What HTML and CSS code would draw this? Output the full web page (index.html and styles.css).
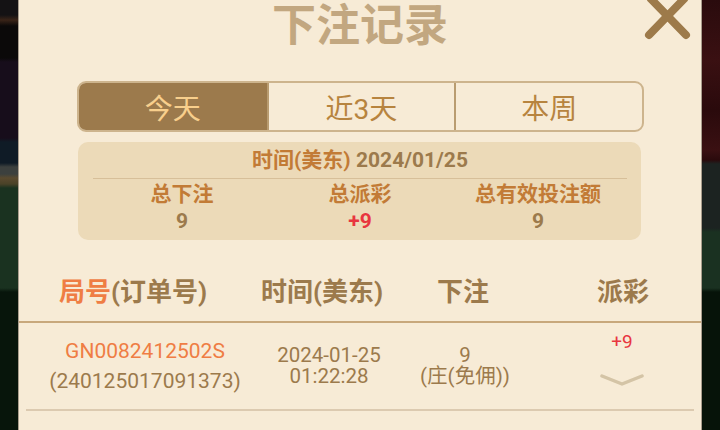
FILE: index.html
```html
<!DOCTYPE html>
<html lang="zh">
<head>
<meta charset="utf-8">
<link rel="stylesheet" href="styles.css">
</head>
<body>
<div class="stage">
  <div class="side side-left"></div>
  <div class="panel">
    <div class="head">
      <h1 class="title">下注记录</h1>
      <svg class="close" viewBox="0 0 60 44" width="60" height="44">
        <path d="M11 -1 L46 35 M44 -1 L9 35" stroke="#9d7a4a" stroke-width="8" stroke-linecap="round" fill="none"/>
      </svg>
    </div>
    <div class="tabs">
      <div class="tab active">今天</div>
      <div class="tab">近3天</div>
      <div class="tab">本周</div>
    </div>
    <div class="summary">
      <div class="sum-date"><span class="sum-key">时间(美东)</span> <span class="sum-val">2024/01/25</span></div>
      <div class="sum-rule"></div>
      <div class="sum-grid">
        <div class="sum-label">总下注</div>
        <div class="sum-label">总派彩</div>
        <div class="sum-label">总有效投注额</div>
        <div class="sum-num">9</div>
        <div class="sum-num red">+9</div>
        <div class="sum-num">9</div>
      </div>
    </div>
    <div class="thead">
      <div class="th"><span class="orange">局号</span>(订单号)</div>
      <div class="th">时间(美东)</div>
      <div class="th">下注</div>
      <div class="th th-last">派彩</div>
    </div>
    <div class="row">
      <div class="cell cell-id">
        <div class="orange">GN0082412502S</div>
        <div>(240125017091373)</div>
      </div>
      <div class="cell cell-tight">
        <div>2024-01-25</div>
        <div>01:22:28</div>
      </div>
      <div class="cell cell-tight">
        <div>9</div>
        <div>(庄(免佣))</div>
      </div>
      <div class="cell cell-win">
        <div class="win">+9</div>
        <svg class="chev" viewBox="0 0 44 14" width="44" height="14">
          <path d="M2 3 L22 11 L42 3" stroke="#d4c4a6" stroke-width="3.5" stroke-linecap="round" stroke-linejoin="round" fill="none"/>
        </svg>
      </div>
    </div>
    <div class="row-rule"></div>
  </div>
  <div class="side side-right"></div>
</div>
</body>
</html>
```

FILE: styles.css
```css
* { box-sizing: border-box; }
html, body { margin: 0; padding: 0; }
body {
  width: 720px;
  height: 430px;
  overflow: hidden;
  font-family: Roboto, "Noto Sans CJK SC", sans-serif;
  background: #07150b;
}
.stage {
  display: flex;
  width: 720px;
  height: 430px;
}
.side { width: 18px; flex: none; height: 430px; }
.side-left {
  background: linear-gradient(to bottom,
    #141214 0, #141214 15px, #3a2418 20px, #0b0909 26px, #0b0909 58px,
    #170d1b 62px, #170d1b 138px, #0f1b26 142px, #0f1b26 163px,
    #3c403e 167px, #3c403e 174px, #5a4a2f 178px, #4a4228 184px,
    #1a3220 188px, #1a3220 288px, #07150b 292px, #07150b 430px);
}
.side-right {
  background: linear-gradient(to bottom,
    #2a0b0d 0, #3a1012 60px, #2a0a0c 110px, #3a1012 150px, #2a0a0c 160px,
    #1c2321 164px, #1c2321 228px, #1a3121 232px, #1a3121 288px,
    #061309 292px, #061309 430px);
}
.panel {
  width: 684px;
  flex: none;
  height: 430px;
  background: #f7ebd6;
  border-left: 1px solid #a99d8d;
  border-right: 1px solid #a99d8d;
  display: flex;
  flex-direction: column;
}
.head {
  position: relative;
  height: 44px;
}
.title {
  margin: 0;
  text-align: center;
  font-size: 44px;
  line-height: 44px;
  font-weight: 700;
  color: #c2a780;
  font-family: "Noto Sans CJK SC", sans-serif;
}
.close {
  position: absolute;
  top: 0;
  left: 621px;
}
.tabs {
  margin: 37px 57px 0 58px;
  height: 51px;
  display: grid;
  grid-template-columns: 1fr 1fr 1fr;
  border: 2px solid #cdb48d;
  border-radius: 9px;
  overflow: hidden;
}
.tab {
  display: flex;
  align-items: center;
  justify-content: center;
  font-size: 28px;
  color: #b7843f;
  border-left: 2px solid #b99c70;
}
.tab:first-child { border-left: none; }
.tab.active {
  background: #9c7a4c;
  color: #f8cf8c;
}
.summary {
  margin: 10px 60px 0 59px;
  height: 98px;
  background: #ecdab8;
  border-radius: 10px;
  padding: 6px 14px 0 15px;
}
.sum-date {
  text-align: center;
  font-size: 21px;
  line-height: 24px;
  font-weight: 700;
}
.sum-key { color: #c27b36; }
.sum-val { color: #9c7a4c; }
.sum-rule {
  margin-top: 6px;
  height: 1px;
  background: #d7bf99;
}
.sum-grid {
  padding-top: 3px;
  display: grid;
  grid-template-columns: 1fr 1fr 1fr;
  text-align: center;
  font-weight: 700;
}
.sum-label {
  font-size: 21px;
  line-height: 24px;
  color: #c27b36;
}
.sum-num {
  font-size: 21px;
  line-height: 30px;
  color: #9c7a4c;
}
.red { color: #e8363f; }
.thead {
  padding: 34px 0 11px;
  display: grid;
  grid-template-columns: 228px 150px 132px 1fr;
  border-bottom: 2px solid #c8a87c;
}
.th {
  text-align: center;
  font-size: 26px;
  line-height: 36px;
  font-weight: 700;
  color: #9c7a4c;
  white-space: nowrap;
}
.th-last { padding-left: 16px; }
.orange { color: #ef7d44; }
.row {
  height: 86px;
  display: grid;
  grid-template-columns: 252px 116px 156px 1fr;
  align-items: center;
  color: #9c7a4c;
  font-size: 21px;
}
.cell {
  text-align: center;
  line-height: 21px;
  white-space: nowrap;
}
.cell-tight { font-size: 20.5px; }
.cell-id { line-height: 30px; }
.cell-win {
  display: flex;
  flex-direction: column;
  align-items: center;
}
.win {
  color: #e8363f;
  font-size: 19px;
  line-height: 22px;
  margin-top: -14px;
}
.chev { margin-top: 20px; }
.row-rule {
  margin: 0 7px;
  height: 2px;
  background: #dccab0;
}
```
